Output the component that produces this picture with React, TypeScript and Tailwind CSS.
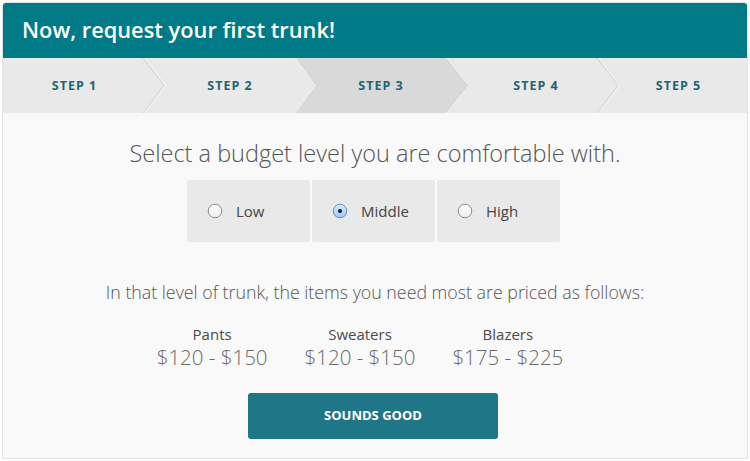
import React from "react";

const steps = [
  { label: "STEP 1", w: 141, pl: 4 },
  { label: "STEP 2", w: 152, pl: 22 },
  { label: "STEP 3", w: 150, pl: 22 },
  { label: "STEP 4", w: 152, pl: 30 },
  { label: "STEP 5", w: 151, pl: 12 },
];

const prices = [
  { name: "Pants", range: "$120 - $150" },
  { name: "Sweaters", range: "$120 - $150" },
  { name: "Blazers", range: "$175 - $225" },
];

function Radio({ checked }: { checked: boolean }) {
  return (
    <svg width="16" height="16" viewBox="0 0 16 16">
      <defs>
        <linearGradient id="rg" x1="0" y1="0" x2="0" y2="1">
          <stop offset="0" stopColor="#d8ebff" />
          <stop offset="1" stopColor="#9cc8f5" />
        </linearGradient>
        <linearGradient id="rw" x1="0" y1="0" x2="0" y2="1">
          <stop offset="0" stopColor="#ffffff" />
          <stop offset="1" stopColor="#ececec" />
        </linearGradient>
      </defs>
      <circle
        cx="8"
        cy="8"
        r="6.8"
        fill={checked ? "url(#rg)" : "url(#rw)"}
        stroke={checked ? "#5a8fc8" : "#8a8a8a"}
        strokeWidth="1"
      />
      {checked && <circle cx="8" cy="8" r="2" fill="#1a1a1a" />}
    </svg>
  );
}

export default function App() {
  const font = { fontFamily: '"Open Sans", "Liberation Sans", sans-serif' };
  return (
    <div className="w-[750px] h-[461px] bg-white pt-[2px] px-[2px]" style={font}>
      <div className="w-[746px] h-[457px] rounded-t-[4px] border border-[#e2e2e2] bg-[#f9f9f9] flex flex-col overflow-hidden">
        <div className="h-[56px] bg-[#007a87] flex items-center pl-[20px] -mx-px -mt-px">
          <span className="text-white text-[21.8px] font-semibold">Now, request your first trunk!</span>
        </div>
        <div className="relative h-[55px] bg-[#e9e9e9] -mx-px">
          <svg className="absolute inset-0" width="748" height="55" viewBox="0 0 748 55">
            <polygon points="293,0 313,27.5 293,55 443,55 465,27.5 443,0" fill="#d9d9d9" />
            <polyline points="141,0 162,27.5 141,55" fill="none" stroke="#d2d2d2" strokeWidth="1" />
            <polyline points="142.5,0 163.5,27.5 142.5,55" fill="none" stroke="#f6f6f6" strokeWidth="1" />
            <polyline points="293,0 313,27.5 293,55" fill="none" stroke="#f2f2f2" strokeWidth="1" />
            <polyline points="443,0 465,27.5 443,55" fill="none" stroke="#cfcfcf" strokeWidth="1" />
            <polyline points="595,0 616,27.5 595,55" fill="none" stroke="#d2d2d2" strokeWidth="1" />
            <polyline points="596.5,0 617.5,27.5 596.5,55" fill="none" stroke="#f6f6f6" strokeWidth="1" />
          </svg>
          <div className="relative flex h-full pt-[2px]">
            {steps.map((s) => (
              <div
                key={s.label}
                className="flex items-center justify-center h-full"
                style={{ width: s.w, paddingLeft: s.pl }}
              >
                <span className="text-[12.5px] font-bold tracking-[1px] text-[#1d6673]">{s.label}</span>
              </div>
            ))}
          </div>
        </div>
        <div className="flex flex-col items-center">
          <div className="mt-[25px] text-[23.5px] leading-[30px] font-light text-[#555555]">
            Select a budget level you are comfortable with.
          </div>
          <div className="mt-[12px] flex gap-[2px] pr-[3px]">
            {["Low", "Middle", "High"].map((l) => (
              <div
                key={l}
                className="w-[123px] h-[62px] bg-[#e9e9e9] rounded-[2px] flex items-center pl-[20px] gap-[13px]"
              >
                <Radio checked={l === "Middle"} />
                <span className="text-[15px] text-[#444444]">{l}</span>
              </div>
            ))}
          </div>
          <div className="mt-[38px] text-[17.8px] leading-[24px] font-light text-[#555555]">
            In that level of trunk, the items you need most are priced as follows:
          </div>
          <div className="mt-[20px] flex gap-[37px] pr-[30px]">
            {prices.map((p) => (
              <div key={p.name} className="flex flex-col items-center">
                <span className="text-[15px] leading-[20px] text-[#4a4a4a]">{p.name}</span>
                <span className="text-[20.5px] leading-[26px] font-light text-[#6a6a6a]">{p.range}</span>
              </div>
            ))}
          </div>
          <button className="mt-[23px] mr-[4px] w-[250px] h-[46px] rounded-[3px] bg-[#1f7686] text-white text-[13px] font-bold">
            SOUNDS GOOD
          </button>
        </div>
      </div>
    </div>
  );
}
